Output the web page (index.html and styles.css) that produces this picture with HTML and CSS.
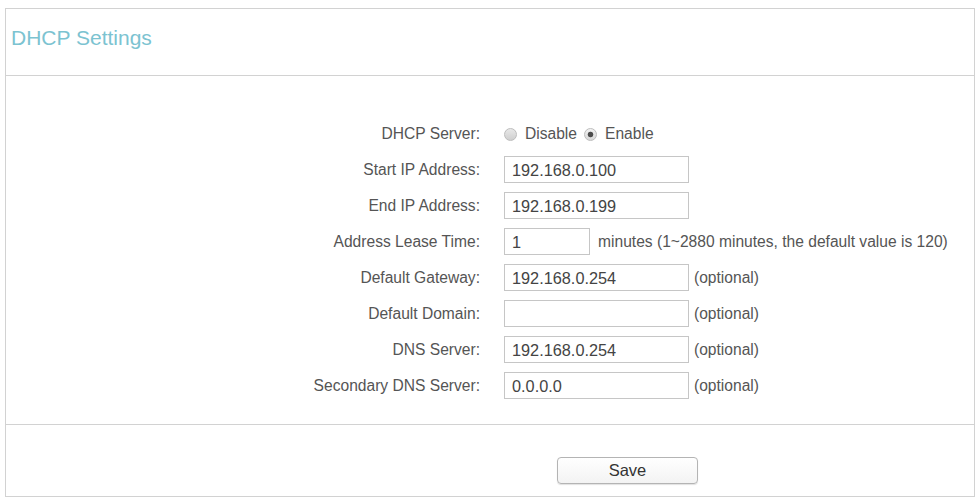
FILE: index.html
```html
<!DOCTYPE html>
<html lang="en">
<head>
  <meta charset="UTF-8">
  <title>DHCP Settings</title>
  <link rel="stylesheet" href="styles.css">
</head>
<body>

  <div class="panel">
    <div class="panel-head">
      <h2 class="panel-title">DHCP Settings</h2>
    </div>

    <div class="panel-body">
      <div class="form-row">
        <label class="form-label">DHCP Server:</label>
        <div class="field">
          <label class="radio"><input type="radio" name="dhcp" value="off"> Disable</label>
          <label class="radio"><input type="radio" name="dhcp" value="on" checked> Enable</label>
        </div>
      </div>

      <div class="form-row">
        <label class="form-label">Start IP Address:</label>
        <div class="field"><input class="text-input" type="text" value="192.168.0.100"></div>
      </div>

      <div class="form-row">
        <label class="form-label">End IP Address:</label>
        <div class="field"><input class="text-input" type="text" value="192.168.0.199"></div>
      </div>

      <div class="form-row">
        <label class="form-label">Address Lease Time:</label>
        <div class="field">
          <input class="text-input short" type="text" value="1">
          <span class="hint wide">minutes (1~2880 minutes, the default value is 120)</span>
        </div>
      </div>

      <div class="form-row">
        <label class="form-label">Default Gateway:</label>
        <div class="field">
          <input class="text-input" type="text" value="192.168.0.254">
          <span class="hint">(optional)</span>
        </div>
      </div>

      <div class="form-row">
        <label class="form-label">Default Domain:</label>
        <div class="field">
          <input class="text-input" type="text" value="">
          <span class="hint">(optional)</span>
        </div>
      </div>

      <div class="form-row">
        <label class="form-label">DNS Server:</label>
        <div class="field">
          <input class="text-input" type="text" value="192.168.0.254">
          <span class="hint">(optional)</span>
        </div>
      </div>

      <div class="form-row">
        <label class="form-label">Secondary DNS Server:</label>
        <div class="field">
          <input class="text-input" type="text" value="0.0.0.0">
          <span class="hint">(optional)</span>
        </div>
      </div>
    </div>

    <div class="panel-foot">
      <button class="save-btn">Save</button>
    </div>
  </div>

</body>
</html>
```

FILE: styles.css
```css
body {
  margin: 0;
  font-family: "Liberation Sans", Arial, sans-serif;
  font-size: 15.6px;
  color: #555;
  background: #fff;
}

.panel {
  margin: 8px 1px 0 5px;
  border: 1px solid #d2d2d2;
}

.panel-head {
  box-sizing: border-box;
  height: 67px;
  padding: 18px 0 0 5px;
  border-bottom: 1px solid #d2d2d2;
}

.panel-title {
  margin: 0;
  font-size: 21px;
  line-height: 21px;
  font-weight: normal;
  color: #7cc3d1;
}

.panel-body {
  display: flex;
  flex-direction: column;
  gap: 9px;
  padding: 44px 0 25px;
  border-bottom: 1px solid #d2d2d2;
}

.form-row {
  display: grid;
  grid-template-columns: 474px 1fr;
  column-gap: 24px;
  align-items: center;
  height: 27px;
}

.form-label {
  text-align: right;
  line-height: 27px;
}

.field {
  display: flex;
  align-items: center;
}

.radio {
  display: flex;
  align-items: center;
  margin-right: 7px;
}

.radio input {
  appearance: none;
  -webkit-appearance: none;
  width: 13px;
  height: 13px;
  margin: 2px 8px 0 0;
  border: 1px solid #bdbdbd;
  border-radius: 50%;
  background: linear-gradient(#e8e8e8, #cfcfcf);
}

.radio input:checked {
  background: radial-gradient(circle, #4d4d4d 0, #4d4d4d 2.4px, transparent 3.2px), linear-gradient(#f2f2f2, #d8d8d8);
}

.text-input {
  box-sizing: border-box;
  width: 185px;
  height: 27px;
  margin: 0;
  padding: 2px 7px 0;
  border: 1px solid #c6c6c6;
  border-radius: 0;
  font-family: "Liberation Sans", Arial, sans-serif;
  font-size: 16.3px;
  color: #444;
  outline: none;
}

.text-input.short {
  width: 86px;
}

.hint {
  margin-left: 5px;
}

.hint.wide {
  margin-left: 8px;
}

.panel-foot {
  padding: 32px 0 12px 551px;
}

.save-btn {
  box-sizing: border-box;
  width: 141px;
  height: 27px;
  padding: 0;
  border: 1px solid #b4b4b4;
  border-radius: 4px;
  background: linear-gradient(#fff, #f3f3f3);
  box-shadow: 0 1px 1px rgba(0, 0, 0, 0.12);
  font-family: "Liberation Sans", Arial, sans-serif;
  font-size: 16.5px;
  color: #333;
  cursor: pointer;
}
```
